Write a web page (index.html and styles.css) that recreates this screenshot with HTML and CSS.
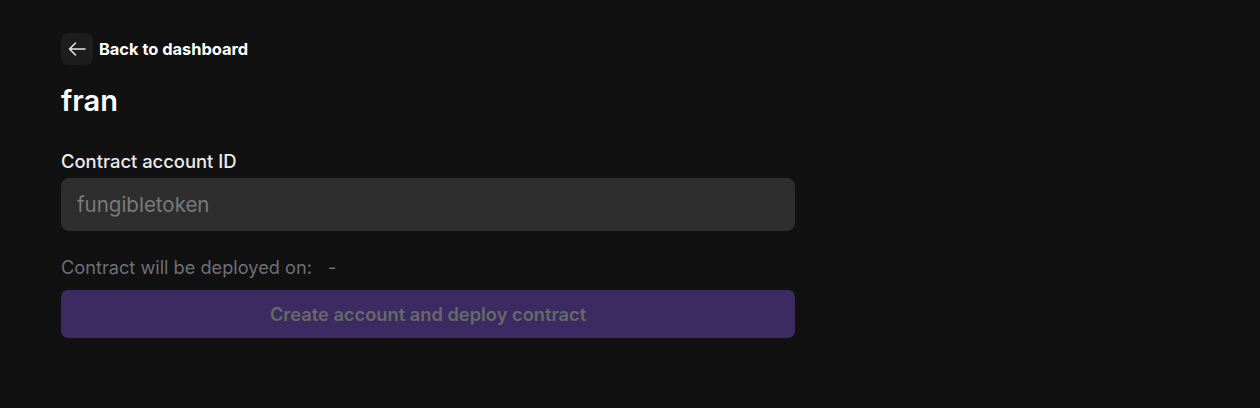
FILE: index.html
```html
<!DOCTYPE html>
<html>
<head>
<meta charset="utf-8">
<link rel="stylesheet" href="styles.css">
</head>
<body>
<main class="page">
  <a class="back" href="#">
    <span class="back-icon">
      <svg width="20" height="20" viewBox="0 0 20 20" fill="none" stroke="#e6e6e6" stroke-width="1.5" stroke-linecap="round" stroke-linejoin="round"><path d="M18 10H2.5M8.5 4L2.5 10L8.5 16"/></svg>
    </span>
    <span class="back-text">Back to dashboard</span>
  </a>
  <h1 class="title">fran</h1>
  <label class="label" for="cid">Contract account ID</label>
  <input id="cid" class="input" placeholder="fungibletoken">
  <p class="deploy"><span>Contract will be deployed on:</span><span class="dash">-</span></p>
  <button class="submit" disabled>Create account and deploy contract</button>
</main>
</body>
</html>
```

FILE: styles.css
```css
html, body {
  margin: 0;
  background: #111111;
  font-family: Inter, "Noto Sans", sans-serif;
}
.page {
  display: flex;
  flex-direction: column;
  align-items: flex-start;
  width: 734px;
  padding: 33px 0 0 61px;
}
.back {
  display: flex;
  align-items: center;
  gap: 6px;
  text-decoration: none;
  color: #ffffff;
}
.back-icon {
  width: 32px;
  height: 32px;
  border-radius: 7px;
  background: #1d1d1d;
  display: flex;
  align-items: center;
  justify-content: center;
}
.back-text {
  font-size: 16.4px;
  font-weight: 700;
}
.title {
  margin: 18px 0 0;
  font-size: 29px;
  font-weight: 600;
  line-height: 36px;
  color: #ffffff;
}
.label {
  margin-top: 31px;
  font-size: 18.4px;
  font-weight: 500;
  line-height: 22px;
  color: #ececec;
}
.input {
  box-sizing: border-box;
  margin-top: 6px;
  width: 734px;
  height: 53px;
  border: none;
  border-radius: 8px;
  background: #2e2e2e;
  padding: 0 16px;
  font-family: inherit;
  font-size: 20.5px;
  color: #eee;
  outline: none;
}
.input::placeholder {
  color: #7a7a7a;
}
.deploy {
  margin: 25px 0 0;
  display: flex;
  gap: 16px;
  font-size: 18.2px;
  line-height: 22px;
  color: #6f6f78;
}
.submit {
  margin-top: 12px;
  width: 734px;
  height: 48px;
  border: none;
  border-radius: 7px;
  background: #3c2b62;
  font-family: inherit;
  font-size: 18.3px;
  font-weight: 600;
  color: #686868;
}
```
